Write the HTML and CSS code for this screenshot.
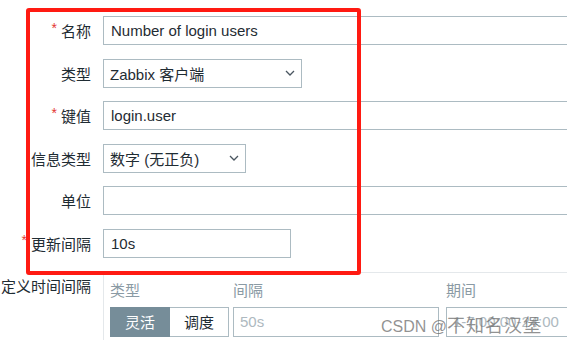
FILE: index.html
```html
<!DOCTYPE html>
<html>
<head>
    <meta charset="utf-8">
    <title>监控项</title>
    <link rel="stylesheet" href="styles.css">
</head>
<body>
    <div class="form">
        <label class="lbl"><span class="req">*</span>名称</label>
        <div class="field"><div class="input wide">Number of login users</div></div>

        <label class="lbl">类型</label>
        <div class="field">
            <div class="input select sel-type">
                <span>Zabbix 客户端</span>
                <svg width="10" height="6" viewBox="0 0 10 6"><path d="M1 1 L5 5 L9 1" fill="none" stroke="#4a5660" stroke-width="1.3"/></svg>
            </div>
        </div>

        <label class="lbl"><span class="req">*</span>键值</label>
        <div class="field"><div class="input wide">login.user</div></div>

        <label class="lbl">信息类型</label>
        <div class="field">
            <div class="input select sel-info">
                <span>数字 (无正负)</span>
                <svg width="10" height="6" viewBox="0 0 10 6"><path d="M1 1 L5 5 L9 1" fill="none" stroke="#4a5660" stroke-width="1.3"/></svg>
            </div>
        </div>

        <label class="lbl">单位</label>
        <div class="field"><div class="input wide"></div></div>

        <label class="lbl"><span class="req">*</span>更新间隔</label>
        <div class="field"><div class="input short">10s</div></div>

        <label class="lbl top">定义时间间隔</label>
        <div class="intervals">
            <div class="th">类型</div>
            <div class="th">间隔</div>
            <div class="th">期间</div>
            <div class="seg">
                <span class="seg-btn on">灵活</span>
                <span class="seg-btn">调度</span>
            </div>
            <div class="input ph delay">50s</div>
            <div class="input ph period">1-7,00:00-24:00</div>
        </div>
    </div>

    <div class="mark"></div>
    <div class="watermark">CSDN @<span class="wm-cn">不知名汉堡</span></div>
</body>
</html>
```

FILE: styles.css
```css
body{
    margin: 0;
    font-family: "Liberation Sans", Arial, "Noto Sans CJK SC", sans-serif;
    font-size: 15px;
    color: #1f2c33;
    background: #fff;
    overflow: hidden;
}
.form{
    display: grid;
    grid-template-columns: 91px 1fr;
    grid-auto-rows: 29px;
    column-gap: 12px;
    row-gap: 13.6px;
    padding-top: 16px;
}
.lbl{
    display: flex;
    align-items: center;
    justify-content: flex-end;
    white-space: nowrap;
}
.lbl.top{
    align-items: flex-start;
    line-height: 29px;
}
.req{
    color: #e33734;
    margin-right: 4px;
    font-size: 14px;
    position: relative;
    top: -3px;
}
.field{
    display: flex;
}
.input{
    box-sizing: border-box;
    height: 29px;
    border: 1px solid #acbbc2;
    padding: 0 7px;
    display: flex;
    align-items: center;
    white-space: nowrap;
    background: #fff;
}
.wide{
    width: calc(100% + 20px);
    flex: none;
}
.short{ width: 188px; }
.select{
    justify-content: space-between;
    padding: 0 6px;
}
.sel-type{ width: 199px; }
.sel-info{ width: 143px; }

.intervals{
    grid-row: span 2;
    border-top: 1px solid #e4e8eb;
    border-left: 1px solid #e4e8eb;
    display: grid;
    grid-template-columns: 123px 213px 1fr;
    grid-template-rows: 34px 30px;
    padding-left: 6px;
}
.th{
    color: #8a9aa4;
    padding-top: 9px;
    line-height: 18px;
}
.seg{
    display: flex;
    height: 30px;
}
.seg-btn{
    box-sizing: border-box;
    width: 59px;
    border: 1px solid #acbbc2;
    display: flex;
    align-items: center;
    justify-content: center;
    background: #fff;
}
.seg-btn.on{
    background: #768d99;
    border-color: #768d99;
    color: #fff;
    width: 60px;
}
.seg-btn + .seg-btn{
    border-left: none;
}
.ph{
    height: 30px;
    color: #aeb9c0;
    padding-left: 6px;
}
.delay{ width: 206px; }
.period{ width: calc(100% + 20px); }

.mark{
    position: absolute;
    left: 26px;
    top: 8px;
    width: 327px;
    height: 259px;
    border: 4px solid #ff1a12;
    border-radius: 3px;
}
.watermark{
    position: absolute;
    left: 381px;
    top: 311px;
    font-size: 16px;
    color: rgba(110, 110, 110, .75);
    white-space: nowrap;
}
.wm-cn{
    font-size: 18px;
    letter-spacing: 1px;
}
```
